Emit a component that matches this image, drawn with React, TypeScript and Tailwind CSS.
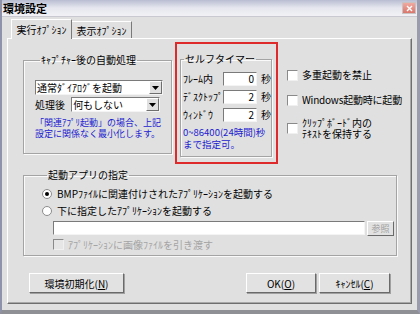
import React from 'react';

const font = "font-['Noto_Sans_CJK_JP','Noto_Sans_CJK_SC',sans-serif]";

function Dropdown({ value, width }: { value: string; width: string }) {
  return (
    <div className={`${width} h-[15px] flex bg-white border border-t-[#7a7a7a] border-l-[#7a7a7a] border-b-[#f4f4f4] border-r-[#f4f4f4]`}>
      <div className="flex-1 pl-[1px] text-[10px] leading-[13px] text-black whitespace-nowrap overflow-hidden">{value}</div>
      <div className="w-[13px] h-[13px] bg-[#e0e0e0] border border-t-white border-l-white border-b-[#6e6e6e] border-r-[#6e6e6e] flex items-center justify-center">
        <svg width="7" height="4" viewBox="0 0 7 4">
          <path d="M0 0h7L3.5 4z" fill="#000" />
        </svg>
      </div>
    </div>
  );
}

function Check({ disabled }: { disabled?: boolean }) {
  return (
    <div
      className={`w-[11px] h-[11px] shrink-0 border border-t-[#8a8a8a] border-l-[#8a8a8a] border-b-[#f0f0f0] border-r-[#f0f0f0] ${
        disabled ? 'bg-[#e6e6e6]' : 'bg-white'
      }`}
    />
  );
}

function Radio({ checked }: { checked?: boolean }) {
  return (
    <div className="w-[10px] h-[10px] shrink-0 rounded-full bg-white border border-[#8c8c8c] flex items-center justify-center">
      {checked && <div className="w-[4px] h-[4px] rounded-full bg-black" />}
    </div>
  );
}

function NumBox({ value }: { value: string }) {
  return (
    <div className="w-[34px] h-[14px] bg-white border border-t-[#7a7a7a] border-l-[#7a7a7a] border-b-[#f4f4f4] border-r-[#f4f4f4] text-right pr-[2px] text-[10px] leading-[12px] text-black">
      {value}
    </div>
  );
}

function Button({ children, width }: { children: React.ReactNode; width: string }) {
  return (
    <div className={`${width} h-[20px] bg-[#e2e2e2] border border-t-white border-l-white border-b-[#6a6a6a] border-r-[#6a6a6a] shadow-[1px_1px_0_#a0a0a0] flex items-center justify-center text-[10px] text-black`}>
      {children}
    </div>
  );
}

export default function App() {
  return (
    <div className={`${font} w-[420px] h-[314px] flex flex-col bg-[#e0e0e0] border-l-2 border-r-[3px] border-b-[4px] border-l-[#8e93ab] border-r-[#9a9cad] border-b-[#8f8f96] overflow-hidden`}>
      {/* title bar */}
      <div className="h-[17px] shrink-0 flex items-center justify-between pl-[1px] pr-[1px] bg-gradient-to-b from-[#b9bdd2] via-[#e6e7ef] to-[#f2f2f5] border-b border-[#c9c9d2]">
        <span className="text-[11px] font-bold leading-[13px] text-black">環境設定</span>
        <div className="w-[14px] h-[12px] bg-gradient-to-b from-[#f0a9a0] to-[#d9766c] border border-[#c9c2c2] flex items-center justify-center">
          <svg width="7" height="7" viewBox="0 0 7 7">
            <path d="M1 1l5 5M6 1l-5 5" stroke="#fff" strokeWidth="1.4" />
          </svg>
        </div>
      </div>

      {/* body */}
      <div className="flex-1 flex flex-col pl-[5px] pr-[5px] pt-[1px]">
        {/* tabs */}
        <div className="flex items-end h-[20px] ml-[4px]">
          <div className="relative z-10 w-[61px] h-[20px] -mb-px bg-[#e0e0e0] border-t border-l border-t-white border-l-white border-r border-r-[#7a7a7a] flex items-center justify-center text-[10px] text-black">
            実行ｵﾌﾟｼｮﾝ
          </div>
          <div className="w-[60px] h-[17px] border-t border-t-white border-r border-r-[#7a7a7a] flex items-center justify-center text-[10px] text-black">
            表示ｵﾌﾟｼｮﾝ
          </div>
        </div>

        {/* tab panel */}
        <div className="h-[266px] border border-t-white border-l-white border-b-[#6e6e6e] border-r-[#6e6e6e] shadow-[inset_-1px_-1px_0_#a8a8a8] flex flex-col">
          <div className="flex items-start pt-[3px]">
            {/* group 1 */}
            <fieldset className="min-w-0 shrink-0 ml-[15px] mt-[12px] w-[149px] h-[100px] border border-[#a4a4a4] shadow-[1px_1px_0_#fafafa,inset_1px_1px_0_#fafafa] px-[11px]">
              <legend className="ml-[5px] px-[1px] text-[10px] leading-[12px] text-black">ｷｬﾌﾟﾁｬｰ後の自動処理</legend>
              <div className="mt-[14px]">
                <Dropdown value="通常ﾀﾞｲｱﾛｸﾞを起動" width="w-[128px]" />
              </div>
              <div className="mt-[2px] flex items-center">
                <span className="w-[37px] text-[10px] leading-[15px] text-black">処理後</span>
                <Dropdown value="何もしない" width="w-[91px]" />
              </div>
              <div className="mt-[5px] text-[9px] leading-[11px] text-[#1c1ccf] whitespace-nowrap">
                <div>「関連ｱﾌﾟﾘ起動」の場合、上記</div>
                <div>設定に関係なく最小化します。</div>
              </div>
            </fieldset>

            {/* self timer, red frame */}
            <div className="shrink-0 ml-[3px] w-[103px] h-[122px] border-2 border-[#de2a2a] pl-[3px] pt-[9px]">
              <fieldset className="min-w-0 w-[92px] h-[104px] border border-[#a4a4a4] shadow-[1px_1px_0_#fafafa,inset_1px_1px_0_#fafafa] pl-[2px]">
                <legend className="ml-[1px] px-[1px] text-[10px] leading-[12px] text-black">セルフタイマー</legend>
                <div className="mt-[7px] flex flex-col gap-[4px]">
                  {[
                    ['ﾌﾚｰﾑ内', '0'],
                    ['ﾃﾞｽｸﾄｯﾌﾟ', '2'],
                    ['ｳｨﾝﾄﾞｳ', '2'],
                  ].map(([label, v]) => (
                    <div key={label} className="flex items-center h-[14px]">
                      <span className="w-[41px] text-[10px] leading-[14px] text-black whitespace-nowrap">{label}</span>
                      <NumBox value={v} />
                      <span className="ml-[4px] text-[10px] leading-[14px] text-black">秒</span>
                    </div>
                  ))}
                </div>
                <div className="mt-[4px] text-[9.5px] leading-[12px] text-[#1c1ccf] whitespace-nowrap">
                  <div>0~86400(24時間)秒</div>
                  <div>まで指定可。</div>
                </div>
              </fieldset>
            </div>

            {/* checkboxes */}
            <div className="ml-[9px] pt-[27px] flex flex-col text-[10px] text-black">
              <div className="flex items-center h-[12px]">
                <Check />
                <span className="ml-[4px] leading-[12px]">多重起動を禁止</span>
              </div>
              <div className="flex items-center h-[12px] mt-[13px]">
                <Check />
                <span className="ml-[4px] leading-[12px] whitespace-nowrap tracking-[-0.2px]">Windows起動時に起動</span>
              </div>
              <div className="flex items-center mt-[11px]">
                <Check />
                <div className="ml-[4px] leading-[11px] whitespace-nowrap">
                  <div>ｸﾘｯﾌﾟﾎﾞｰﾄﾞ内の</div>
                  <div>ﾃｷｽﾄを保持する</div>
                </div>
              </div>
            </div>
          </div>

          {/* group 2 */}
          <fieldset className="min-w-0 ml-[15px] mt-[5px] w-[374px] h-[87px] border border-[#a4a4a4] shadow-[1px_1px_0_#fafafa,inset_1px_1px_0_#fafafa] pl-[18px]">
            <legend className="ml-[5px] px-[1px] text-[10px] leading-[12px] text-black">起動アプリの指定</legend>
            <div className="mt-[7px] flex items-center h-[12px] text-[10px] text-black">
              <Radio checked />
              <span className="ml-[5px] leading-[12px] whitespace-nowrap">BMPﾌｧｲﾙに関連付けされたｱﾌﾟﾘｹｰｼｮﾝを起動する</span>
            </div>
            <div className="mt-[5px] flex items-center h-[12px] text-[10px] text-black">
              <Radio />
              <span className="ml-[5px] leading-[12px] whitespace-nowrap">下に指定したｱﾌﾟﾘｹｰｼｮﾝを起動する</span>
            </div>
            <div className="mt-[4px] ml-[11px] flex items-start">
              <div className="w-[312px] h-[14px] bg-white border border-t-[#7a7a7a] border-l-[#7a7a7a] border-b-[#f4f4f4] border-r-[#f4f4f4]" />
              <div className="ml-[2px] w-[27px] h-[15px] bg-[#e2e2e2] border border-t-white border-l-white border-b-[#6a6a6a] border-r-[#6a6a6a] flex items-center justify-center text-[9px] text-[#a0a0a0]">
                参照
              </div>
            </div>
            <div className="mt-[3px] ml-[11px] flex items-center h-[11px] text-[10px]">
              <Check disabled />
              <span className="ml-[4px] leading-[11px] text-[#a4a4a4] whitespace-nowrap">ｱﾌﾟﾘｹｰｼｮﾝに画像ﾌｧｲﾙを引き渡す</span>
            </div>
          </fieldset>

          {/* buttons */}
          <div className="mt-[17px] flex items-start">
            <div className="ml-[21px]">
              <Button width="w-[95px]">
                <span>環境初期化(<u>N</u>)</span>
              </Button>
            </div>
            <div className="ml-auto mr-[21px] flex gap-[3px]">
              <Button width="w-[70px]">
                <span>OK(<u>O</u>)</span>
              </Button>
              <Button width="w-[71px]">
                <span>ｷｬﾝｾﾙ(<u>C</u>)</span>
              </Button>
            </div>
          </div>
        </div>
      </div>
    </div>
  );
}
